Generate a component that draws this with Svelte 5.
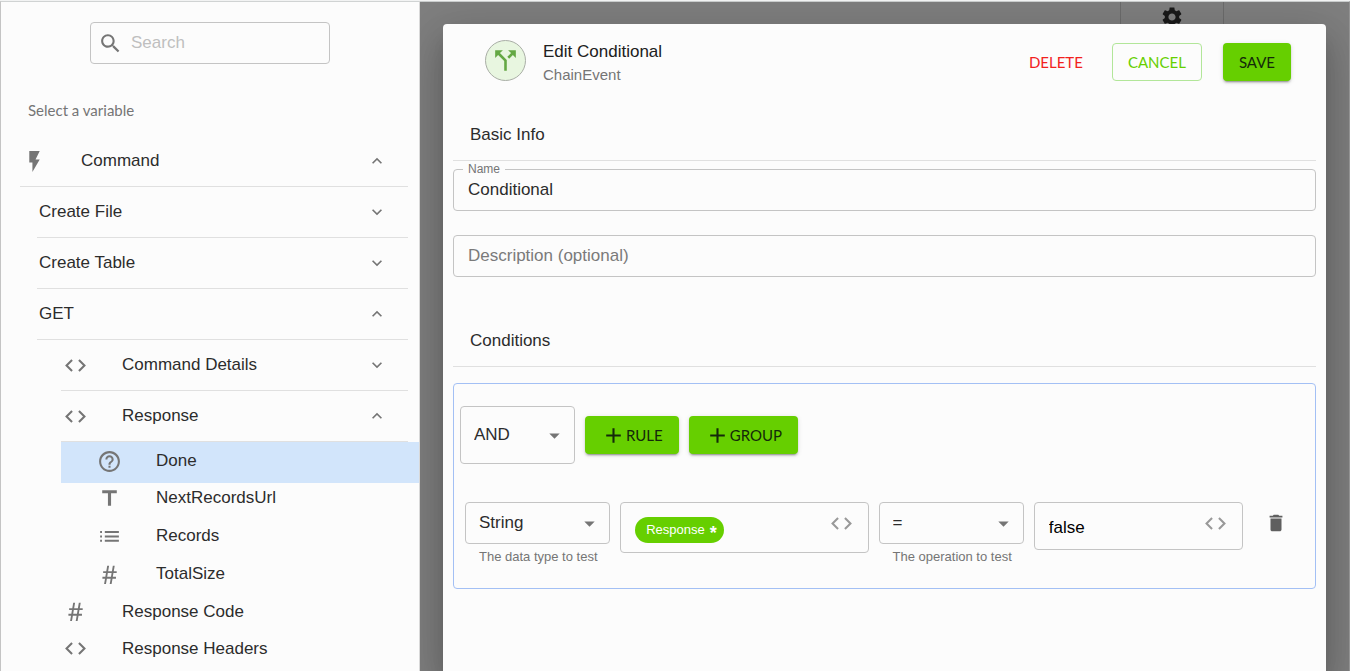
<script>
	const icons = {
		search: 'M15.5 14h-.79l-.28-.27C15.41 12.59 16 11.11 16 9.5 16 5.91 13.09 3 9.5 3S3 5.91 3 9.5 5.91 16 9.5 16c1.61 0 3.09-.59 4.23-1.57l.27.28v.79l5 4.99L20.49 19l-4.99-5zm-6 0C7.01 14 5 11.99 5 9.5S7.01 5 9.5 5 14 7.01 14 9.5 11.99 14 9.5 14z',
		flash: 'M7 2v11h3v9l7-12h-4l4-8z',
		code: 'M9.4 16.6 4.8 12l4.6-4.6L8 6l-6 6 6 6 1.4-1.4zm5.2 0 4.6-4.6-4.6-4.6L16 6l6 6-6 6-1.4-1.4z',
		help: 'M11 18h2v-2h-2v2zm1-16C6.48 2 2 6.48 2 12s4.48 10 10 10 10-4.48 10-10S17.52 2 12 2zm0 18c-4.41 0-8-3.59-8-8s3.59-8 8-8 8 3.59 8 8-3.59 8-8 8zm0-14c-2.21 0-4 1.79-4 4h2c0-1.1.9-2 2-2s2 .9 2 2c0 2-3 1.75-3 5h2c0-2.25 3-2.5 3-5 0-2.21-1.79-4-4-4z',
		title: 'M5 4v3h5.5v12h3V7H19V4z',
		list: 'M3 11h1.8v1.9H3zM3 15.2h1.8v1.9H3zM3 6.8h1.8v1.9H3zM7.5 11H21v1.9H7.5zM7.5 15.2H21v1.9H7.5zM7.5 6.8H21v1.9H7.5z',
		hash: 'M9.8 3.5h1.8l-.9 5.3h3.6l.9-5.3H17l-.9 5.3h2.8v1.8h-3.1l-.6 3.6h3V16h-3.3l-.9 5.2h-1.8l.9-5.2H9.5l-.9 5.2H6.8l.9-5.2H5.2v-1.8H8l.6-3.6H5.9V8.8h3zM10.4 10.6l-.6 3.6h3.6l.6-3.6z',
		more: 'M16.59 8.59 12 13.17 7.41 8.59 6 10l6 6 6-6z',
		less: 'm12 8-6 6 1.41 1.41L12 10.83l4.59 4.58L18 14z',
		arrow: 'm7 10 5 5 5-5z',
		split: 'm14 4 2.29 2.29-2.88 2.88 1.42 1.42 2.88-2.88L20 10V4zm-4 0H4v6l2.29-2.29 4.71 4.7V20h2v-8.41l-5.29-5.3z',
		plus: 'M19 13h-6v6h-2v-6H5v-2h6V5h2v6h6z',
		trash: 'M6 19c0 1.1.9 2 2 2h8c1.1 0 2-.9 2-2V7H6v12zM19 4h-3.5l-1-1h-5l-1 1H5v2h14V4z',
		gear: 'M19.14 12.94c.04-.3.06-.61.06-.94 0-.32-.02-.64-.07-.94l2.03-1.58c.18-.14.23-.41.12-.61l-1.92-3.32c-.12-.22-.37-.29-.59-.22l-2.39.96c-.5-.38-1.03-.7-1.62-.94l-.36-2.54c-.04-.24-.24-.41-.48-.41h-3.84c-.24 0-.43.17-.47.41l-.36 2.54c-.59.24-1.13.57-1.62.94l-2.39-.96c-.22-.08-.47 0-.59.22L2.74 8.87c-.12.21-.08.47.12.61l2.03 1.58c-.05.3-.09.63-.09.94s.02.64.07.94l-2.03 1.58c-.18.14-.23.41-.12.61l1.92 3.32c.12.22.37.29.59.22l2.39-.96c.5.38 1.03.7 1.62.94l.36 2.54c.05.24.24.41.48.41h3.84c.24 0 .44-.17.47-.41l.36-2.54c.59-.24 1.13-.56 1.62-.94l2.39.96c.22.08.47 0 .59-.22l1.92-3.32c.12-.22.07-.47-.12-.61l-2.01-1.58zM12 15.6c-1.98 0-3.6-1.62-3.6-3.6s1.62-3.6 3.6-3.6 3.6 1.62 3.6 3.6-1.62 3.6-3.6 3.6z'
	}

	const variables = $state([
		{
			label: 'Command', icon: 'flash', open: true, children: [
				{ label: 'Create File', open: false, children: [] },
				{ label: 'Create Table', open: false, children: [] },
				{
					label: 'GET', open: true, children: [
						{ label: 'Command Details', icon: 'code', open: false, children: [] },
						{
							label: 'Response', icon: 'code', open: true, children: [
								{ label: 'Done', icon: 'help' },
								{ label: 'NextRecordsUrl', icon: 'title' },
								{ label: 'Records', icon: 'list' },
								{ label: 'TotalSize', icon: 'hash' }
							]
						},
						{ label: 'Response Code', icon: 'hash' },
						{ label: 'Response Headers', icon: 'code' }
					]
				}
			]
		}
	])

	let selected = $state('Done')
	let search = $state('')
	let name = $state('Conditional')
	let description = $state('')
	let value = $state('false')
</script>

{#snippet icon(id)}
	<svg class="icon" viewBox="0 0 24 24" aria-hidden="true"><path d={icons[id]} /></svg>
{/snippet}

{#snippet tree(items, level)}
	<ul class="level-{level}">
		{#each items as item}
			<li>
				{#if item.children}
					<button class="row branch" aria-expanded={item.open} onclick={() => (item.open = !item.open)}>
						{#if item.icon}{@render icon(item.icon)}{/if}
						<span class="label">{item.label}</span>
						<span class="chevron">{@render icon(item.open ? 'less' : 'more')}</span>
					</button>
					{#if item.open && item.children.length}
						{@render tree(item.children, level + 1)}
					{/if}
				{:else}
					<button class="row leaf" class:selected={selected === item.label} onclick={() => (selected = item.label)}>
						{@render icon(item.icon)}
						<span class="label">{item.label}</span>
					</button>
				{/if}
			</li>
		{/each}
	</ul>
{/snippet}

<div class="page">
	<aside>
		<label class="search">
			{@render icon('search')}
			<input type="text" placeholder="Search" aria-label="Search" bind:value={search} />
		</label>
		<p class="hint">Select a variable</p>
		{@render tree(variables, 0)}
	</aside>

	<main>
		<button class="settings" aria-label="Settings">{@render icon('gear')}</button>

		<div class="dialog" role="dialog" aria-labelledby="dialog-title">
			<header>
				<span class="avatar">{@render icon('split')}</span>
				<div class="heading">
					<h1 id="dialog-title">Edit Conditional</h1>
					<p>ChainEvent</p>
				</div>
				<div class="actions">
					<button class="btn delete">DELETE</button>
					<button class="btn outlined">CANCEL</button>
					<button class="btn filled">SAVE</button>
				</div>
			</header>

			<section class="basic">
				<h2>Basic Info</h2>
				<div class="field">
					<label for="name">Name</label>
					<input id="name" type="text" bind:value={name} />
				</div>
				<div class="field">
					<input type="text" placeholder="Description (optional)" aria-label="Description" bind:value={description} />
				</div>
			</section>

			<section class="conditions">
				<h2>Conditions</h2>
				<div class="group">
					<div class="toolbar">
						<div class="select tall">
							<select aria-label="Combinator">
								<option>AND</option>
								<option>OR</option>
							</select>
							{@render icon('arrow')}
						</div>
						<button class="btn filled add">{@render icon('plus')}RULE</button>
						<button class="btn filled add">{@render icon('plus')}GROUP</button>
					</div>

					<div class="rule">
						<div>
							<div class="select">
								<select id="data-type">
									<option>String</option>
									<option>Number</option>
								</select>
								{@render icon('arrow')}
							</div>
							<label class="helper" for="data-type">The data type to test</label>
						</div>
						<div class="box variable">
							<button class="chip">Response <b>*</b></button>
							<button class="insert" aria-label="Insert variable">{@render icon('code')}</button>
						</div>
						<div>
							<div class="select">
								<select id="operation">
									<option>=</option>
									<option>!=</option>
								</select>
								{@render icon('arrow')}
							</div>
							<label class="helper" for="operation">The operation to test</label>
						</div>
						<div class="box value">
							<input type="text" aria-label="Value" bind:value />
							<button class="insert" aria-label="Insert variable">{@render icon('code')}</button>
						</div>
						<button class="remove" aria-label="Remove rule">{@render icon('trash')}</button>
					</div>
				</div>
			</section>
		</div>
	</main>
</div>

<style>
	:global(body) {
		background: #fcfcfc;
	}

	.page, .page * {
		box-sizing: border-box;
	}

	.page {
		display: flex;
		min-height: 100vh;
		border-top: 1px solid #f2f3f3;
		font-family: 'Liberation Sans', Arial, sans-serif;
		font-size: 17px;
		line-height: 20px;
		color: #2c2c2c;
	}

	h1, h2, p, ul {
		margin: 0;
		padding: 0;
		font-size: 17px;
		font-weight: 400;
	}

	ul {
		list-style: none;
	}

	button, input, select {
		margin: 0;
		padding: 0;
		border: 0;
		background: none;
		font: inherit;
		color: inherit;
		outline: none;
	}

	input {
		min-width: 0;
	}

	button {
		cursor: pointer;
	}

	.icon {
		display: block;
		flex: none;
		width: 25px;
		height: 25px;
		fill: #757575;
	}

	/* sidebar */
	aside {
		flex: none;
		width: 420px;
		border-top: 1px solid #d0d3d3;
		border-left: 1px solid #c4c4c4;
		border-right: 1px solid #d8d8d8;
		background: #fcfcfc;
	}

	.search {
		display: flex;
		align-items: center;
		gap: 8px;
		width: 240px;
		height: 42px;
		margin: 20px auto 0;
		padding: 0 7px;
		border: 1px solid #c4c4c4;
		border-radius: 4px;
	}

	.search input {
		flex: 1;
	}

	.search input::placeholder {
		color: #bfbfbf;
		opacity: 1;
	}

	.hint {
		margin: 36px 0 16px 27px;
		font-family: Lato, sans-serif;
		font-size: 15px;
		color: #757575;
	}

	.row {
		display: flex;
		align-items: center;
		width: 100%;
		padding-left: 2px;
		text-align: left;
	}

	.row .icon + .label {
		margin-left: 34px;
	}

	.branch {
		width: calc(100% - 11px);
		height: 51px;
		border-bottom: 1px solid #e0e0e0;
	}

	.chevron {
		margin-left: auto;
		padding-right: 21px;
	}

	.chevron .icon {
		width: 20px;
		height: 20px;
	}

	.leaf {
		height: 37px;
	}

	.level-0 {
		padding-left: 19px;
	}

	.level-1 {
		padding-left: 17px;
	}

	.level-2 {
		padding-left: 24px;
	}

	.level-3 .leaf {
		height: 38px;
		padding-left: 36px;
	}

	.level-3 .selected {
		height: 41px;
		margin-bottom: -4px;
		padding-bottom: 3px;
		background: #d2e5fb;
	}

	/* dialog */
	main {
		position: relative;
		display: flex;
		flex: 1;
		min-width: 0;
		padding: 22px 23px 0;
		border-top: 1px solid #c9cccc;
		border-right: 1px solid #939393;
		background: #7f7f7f;
		overflow: hidden;
	}

	.settings {
		position: absolute;
		top: 0;
		right: 125px;
		display: flex;
		justify-content: center;
		width: 104px;
		height: 48px;
		padding-top: 3px;
		border: 1px solid #6c6c6c;
		border-width: 0 1px;
	}

	.settings .icon {
		width: 24px;
		height: 24px;
		fill: #1a1a1a;
	}

	.dialog {
		position: relative;
		flex: 1;
		min-width: 0;
		padding: 16px 10px 24px;
		border-radius: 4px 4px 0 0;
		background: #fcfcfc;
		box-shadow: 0 11px 15px -7px rgba(0, 0, 0, 0.2), 0 24px 38px 3px rgba(0, 0, 0, 0.14), 0 9px 46px 8px rgba(0, 0, 0, 0.12);
	}

	header {
		display: flex;
		align-items: flex-start;
		gap: 17px;
		padding: 0 25px 0 32px;
	}

	.avatar {
		display: grid;
		place-items: center;
		width: 41px;
		height: 41px;
		border: 1px solid #a9aea6;
		border-radius: 50%;
		background: #e8f6e0;
	}

	.avatar .icon {
		width: 31px;
		height: 31px;
		fill: #64a844;
	}

	.heading {
		flex: 1;
		white-space: nowrap;
	}

	h1 {
		line-height: 24px;
		color: #202020;
	}

	.heading p {
		font-size: 15px;
		line-height: 22px;
		color: #757575;
	}

	.actions {
		display: flex;
		gap: 21px;
		padding-top: 3px;
	}

	.btn {
		display: flex;
		align-items: center;
		height: 38px;
		padding: 0 16px;
		border-radius: 4px;
		font-family: Lato, sans-serif;
		font-size: 15px;
	}

	.delete {
		padding: 0 8px;
		color: #f2211d;
	}

	.outlined {
		padding: 0 15px;
		border: 1px solid #b2e699;
		color: #66cf00;
	}

	.filled {
		background: #66cf00;
		color: #14290a;
		box-shadow: 0 3px 1px -2px rgba(0, 0, 0, 0.2), 0 2px 2px 0 rgba(0, 0, 0, 0.14), 0 1px 5px 0 rgba(0, 0, 0, 0.12);
	}

	h2 {
		padding: 0 17px 15px;
		border-bottom: 1px solid #e0e0e0;
	}

	.basic {
		margin-top: 39px;
	}

	.field {
		position: relative;
		height: 42px;
		margin-top: 8px;
		border: 1px solid #c4c4c4;
		border-radius: 4px;
	}

	.field + .field {
		margin-top: 24px;
	}

	.field label {
		position: absolute;
		top: -8px;
		left: 9px;
		padding: 0 5px;
		background: #fcfcfc;
		font-size: 12px;
		line-height: 14px;
		color: #757575;
	}

	.field input {
		width: 100%;
		height: 100%;
		padding: 0 14px;
	}

	.field input::placeholder {
		color: #7a7a7a;
		opacity: 1;
	}

	.conditions {
		margin-top: 54px;
	}

	.group {
		margin-top: 16px;
		padding: 22px 6px;
		border: 1px solid #a3c0f5;
		border-radius: 4px;
	}

	.toolbar {
		display: flex;
		align-items: center;
		gap: 10px;
	}

	.select {
		display: grid;
		align-items: center;
		height: 42px;
		border: 1px solid #c4c4c4;
		border-radius: 4px;
	}

	.select select, .select .icon {
		grid-area: 1 / 1;
	}

	.select select {
		width: 100%;
		height: 100%;
		padding: 0 32px 0 13px;
		appearance: none;
	}

	.select .icon {
		justify-self: end;
		margin-right: 7px;
		pointer-events: none;
	}

	.tall {
		width: 115px;
		height: 58px;
	}

	.add {
		padding-left: 16px;
	}

	.add .icon {
		fill: #14290a;
	}

	.rule {
		display: grid;
		grid-template-columns: minmax(0, 145fr) minmax(0, 248fr) minmax(0, 145fr) minmax(0, 209fr) 46px;
		align-items: start;
		gap: 10px;
		margin: 38px 10px 0 5px;
	}

	.helper {
		display: block;
		margin: 4px 0 0 14px;
		font-size: 13px;
		line-height: 18px;
		white-space: nowrap;
		color: #757575;
	}

	.box {
		display: flex;
		justify-content: space-between;
		border: 1px solid #c4c4c4;
		border-radius: 4px;
	}

	.variable {
		height: 51px;
		padding: 14px 14px 0;
	}

	.value {
		height: 48px;
		padding: 0 14px;
	}

	.value input {
		flex: 1;
		padding-top: 4px;
		color: #000;
	}

	.insert {
		align-self: flex-start;
	}

	.value .insert {
		margin-top: 8px;
	}

	.variable .insert {
		margin-top: -6px;
	}

	.insert .icon {
		fill: #999;
	}

	.chip {
		display: flex;
		gap: 5px;
		height: 26px;
		padding: 0 7px 0 11px;
		border-radius: 13px;
		background: #66cf00;
		font-size: 13px;
		line-height: 26px;
		white-space: nowrap;
		color: #fff;
	}

	.chip b {
		font-size: 18px;
		line-height: 32px;
	}

	.remove {
		justify-self: center;
		margin-top: 10px;
	}

	.remove .icon {
		width: 22px;
		height: 22px;
		fill: #5f5f5f;
	}
</style>
